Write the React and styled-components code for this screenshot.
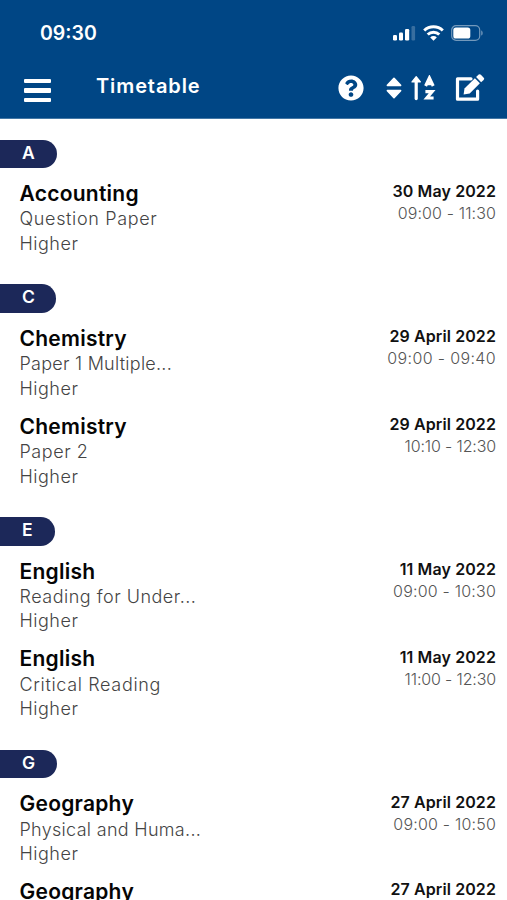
import React from "react";
import styled, { createGlobalStyle } from "styled-components";
import { FaQuestionCircle } from "react-icons/fa";

const sections = [
  {
    letter: "A",
    width: 57,
    exams: [
      { subject: "Accounting", paper: "Question Paper", tracking: 0.65, level: "Higher", date: "30 May 2022", time: "09:00 - 11:30", timeTracking: 0.12 },
    ],
  },
  {
    letter: "C",
    width: 56,
    exams: [
      { subject: "Chemistry", paper: "Paper 1 Multiple...", tracking: 0.25, level: "Higher", date: "29 April 2022", time: "09:00 - 09:40", timeTracking: 0.36 },
      { subject: "Chemistry", paper: "Paper 2", tracking: 0.55, level: "Higher", date: "29 April 2022", time: "10:10 - 12:30", timeTracking: -0.15 },
    ],
  },
  {
    letter: "E",
    width: 55,
    exams: [
      { subject: "English", paper: "Reading for Under...", tracking: 0.5, level: "Higher", date: "11 May 2022", time: "09:00 - 10:30", timeTracking: 0.2 },
      { subject: "English", paper: "Critical Reading", tracking: 0.65, level: "Higher", date: "11 May 2022", time: "11:00 - 12:30", timeTracking: -0.15 },
    ],
  },
  {
    letter: "G",
    width: 56.5,
    exams: [
      { subject: "Geography", paper: "Physical and Huma...", tracking: 0.3, level: "Higher", date: "27 April 2022", time: "09:00 - 10:50", timeTracking: 0.2 },
      { subject: "Geography", date: "27 April 2022" },
    ],
  },
];

const SignalIcon = () => (
  <svg width="23" height="16" viewBox="0 0 23 16" fill="#fff">
    <rect x="0" y="10" width="4" height="5.5" rx="1.2" />
    <rect x="6" y="7.5" width="4" height="8" rx="1.2" />
    <rect x="12" y="4" width="4.2" height="11.5" rx="1.2" />
    <rect x="18.5" y="1" width="3.6" height="14.5" rx="1.2" opacity="0.22" />
  </svg>
);

const WifiIcon = () => (
  <svg width="21" height="16" viewBox="0 0 21 16" fill="none" stroke="#fff" strokeWidth="3">
    <path d="M1.2 5.5a13.4 13.4 0 0 1 18.6 0" />
    <path d="M4.7 9.5a8.4 8.4 0 0 1 11.6 0" />
    <path d="M10.5 15.8l-3.3-3.4a4.7 4.7 0 0 1 6.6 0z" fill="#fff" stroke="none" />
  </svg>
);

const BatteryIcon = () => (
  <svg width="32" height="16" viewBox="0 0 32 16">
    <rect x="0.7" y="0.7" width="28" height="14.6" rx="4.4" fill="none" stroke="#fff" strokeOpacity="0.45" strokeWidth="1.2" />
    <rect x="2.3" y="2.4" width="17" height="11.2" rx="2.6" fill="#fff" />
    <path d="M30.3 5.4c1.7.6 1.7 4.6 0 5.2z" fill="#fff" fillOpacity="0.5" />
  </svg>
);

const SortIcon = () => (
  <svg width="16" height="22" viewBox="0 0 16 22" fill="#fff" stroke="#fff" strokeWidth="1.6" strokeLinejoin="round">
    <path d="M8 1.4L14.6 8.4H1.4z" />
    <path d="M8 20.6L1.4 13.6H14.6z" />
  </svg>
);

const SortAlphaIcon = () => (
  <svg width="25" height="26" viewBox="0 0 25 26" fill="none" stroke="#fff">
    <path d="M5.2 23.6V5" strokeWidth="3.2" strokeLinecap="round" />
    <path d="M5.2 1.6L9.4 6.9H1z" fill="#fff" strokeWidth="1.2" strokeLinejoin="round" />
    <path d="M14.6 11L18.4 2.9L22.2 11M16 8.6h4.8" strokeWidth="3.1" />
    <path d="M14.4 16.6H21.2L15.8 23H22.6" strokeWidth="3.1" />
  </svg>
);

const EditIcon = () => (
  <svg width="31" height="28" viewBox="0 0 31 28" fill="none">
    <path d="M16 4.8H2.5V25.2H22.6V17" stroke="#fff" strokeWidth="3.2" strokeLinejoin="round" strokeLinecap="round" />
    <path d="M8.6 20.4l.9-6L19.9 4.2l5 5.1L14.7 19.4z" fill="#fff" />
    <path d="M21.1 3.1L23.7.6q1.1-.9 2.2.2l2.8 2.9q1 1.1-.1 2.2L26.1 8.2z" fill="#fff" />
  </svg>
);

const Exam = ({ subject, paper, tracking, level, date, time, timeTracking }) => (
  <ExamRow>
    <Details>
      <Subject>{subject}</Subject>
      {paper && <Detail $tracking={tracking}>{paper}</Detail>}
      {level && <Detail>{level}</Detail>}
    </Details>
    <When>
      <ExamDate>{date}</ExamDate>
      {time && <ExamTime $tracking={timeTracking}>{time}</ExamTime>}
    </When>
  </ExamRow>
);

const App = () => (
  <Screen>
    <GlobalStyle />
    <Header>
      <StatusBar>
        <Clock>09:30</Clock>
        <StatusIcons>
          <SignalIcon />
          <WifiIcon />
          <BatteryIcon />
        </StatusIcons>
      </StatusBar>
      <NavBar>
        <MenuButton aria-label="Menu">
          <MenuLine />
          <MenuLine />
          <MenuLine />
        </MenuButton>
        <Title>Timetable</Title>
        <Actions>
          <IconButton aria-label="Help" $gap={22}>
            <FaQuestionCircle size={26} />
          </IconButton>
          <IconButton aria-label="Sort" $gap={19}>
            <SortIcon />
            <SortAlphaIcon />
          </IconButton>
          <IconButton aria-label="Edit">
            <EditIcon />
          </IconButton>
        </Actions>
      </NavBar>
    </Header>
    <List>
      {sections.map(({ letter, width, exams }) => (
        <Section key={letter}>
          <Letter $width={width}>{letter}</Letter>
          {exams.map((exam, i) => (
            <Exam key={i} {...exam} />
          ))}
        </Section>
      ))}
    </List>
  </Screen>
);

export default App;

const GlobalStyle = createGlobalStyle`
  body {
    margin: 0;
    overflow: hidden;
    background: #fff;
  }
  * {
    box-sizing: border-box;
  }
`;

const Screen = styled.div`
  display: flex;
  flex-direction: column;
  height: 100vh;
  overflow: hidden;
  font-family: Inter, "Liberation Sans", sans-serif;
`;

const Header = styled.header`
  flex: none;
  height: 119px;
  color: #fff;
  background: #004685;
  border-bottom: 1px solid #4377a5;
`;

const StatusBar = styled.div`
  display: flex;
  justify-content: space-between;
  height: 60px;
  padding: 21px 24px 0 40px;
`;

const Clock = styled.span`
  font-size: 19.5px;
  font-weight: 600;
  line-height: 25px;
`;

const StatusIcons = styled.div`
  display: flex;
  gap: 7px;
  padding-top: 4px;
`;

const NavBar = styled.div`
  display: flex;
  align-items: flex-start;
  padding: 0 21px 0 24px;
`;

const MenuButton = styled.button`
  display: flex;
  flex-direction: column;
  gap: 5px;
  width: 27px;
  margin: 19px 45px 0 0;
  padding: 0;
  border: none;
  background: transparent;
`;

const MenuLine = styled.span`
  width: 27px;
  height: 4.3px;
  border-radius: 1px;
  background: #fff;
`;

const Title = styled.h1`
  margin: 12px 0 0;
  font-size: 20px;
  font-weight: 600;
  line-height: 28px;
  letter-spacing: 0.9px;
`;

const Actions = styled.div`
  display: flex;
  align-items: center;
  height: 28px;
  margin: 14px 0 0 auto;
`;

const IconButton = styled.button`
  display: flex;
  align-items: center;
  gap: 9.5px;
  margin-right: ${props => props.$gap || 0}px;
  padding: 0;
  border: none;
  color: #fff;
  background: transparent;
`;

const List = styled.main`
  padding-top: 20.5px;
`;

const Section = styled.section`
  display: flex;
  flex-direction: column;
`;

const Letter = styled.h2`
  width: ${props => props.$width}px;
  height: 28.5px;
  margin: 0 0 14px;
  padding-left: 22px;
  border-radius: 0 14.25px 14.25px 0;
  color: #fff;
  background: #1c2859;
  font-size: 17.5px;
  font-weight: 600;
  line-height: 26px;
`;

const ExamRow = styled.article`
  display: flex;
  justify-content: space-between;
  height: 87.75px;
  padding: 0 11px 0 19.5px;
  white-space: nowrap;

  &:last-child {
    margin-bottom: 14.7px;
  }
`;

const Details = styled.div`
  line-height: 24.4px;
`;

const Subject = styled.h3`
  margin: 0 0 1px;
  color: #050505;
  font-size: 21px;
  font-weight: 600;
  letter-spacing: 0.25px;
`;

const Detail = styled.p`
  margin: 0;
  color: #444;
  font-size: 18px;
  font-weight: 300;
  letter-spacing: ${props => props.$tracking || 0.5}px;
`;

const When = styled.div`
  margin-top: -1.6px;
  text-align: right;
  line-height: 22px;
`;

const ExamDate = styled.p`
  margin: 0;
  color: #111;
  font-size: 16px;
  font-weight: 600;
  letter-spacing: 0.1px;
`;

const ExamTime = styled.p`
  margin: 0;
  color: #555;
  font-size: 16px;
  font-weight: 300;
  letter-spacing: ${props => props.$tracking}px;
`;
